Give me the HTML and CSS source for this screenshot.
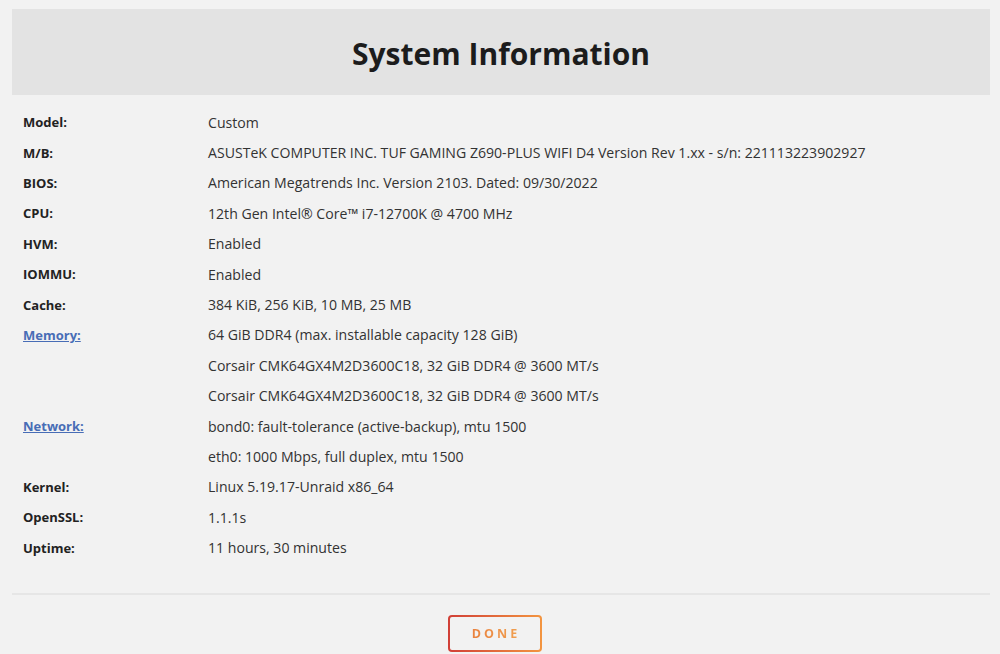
FILE: index.html
```html
<!DOCTYPE html>
<html>
<head>
<meta charset="utf-8">
<link rel="stylesheet" href="styles.css">
</head>
<body>
<div class="page">
  <div class="header"><h1 class="title">System Information</h1></div>
  <div class="info">
    <div class="row"><div class="label">Model:</div><div class="value">Custom</div></div>
    <div class="row"><div class="label">M/B:</div><div class="value">ASUSTeK COMPUTER INC. TUF GAMING Z690-PLUS WIFI D4 Version Rev 1.xx - s/n: 221113223902927</div></div>
    <div class="row"><div class="label">BIOS:</div><div class="value">American Megatrends Inc. Version 2103. Dated: 09/30/2022</div></div>
    <div class="row"><div class="label">CPU:</div><div class="value">12th Gen Intel® Core™ i7-12700K @ 4700 MHz</div></div>
    <div class="row"><div class="label">HVM:</div><div class="value">Enabled</div></div>
    <div class="row"><div class="label">IOMMU:</div><div class="value">Enabled</div></div>
    <div class="row"><div class="label">Cache:</div><div class="value">384 KiB, 256 KiB, 10 MB, 25 MB</div></div>
    <div class="row"><div class="label"><a class="link" href="#">Memory:</a></div><div class="value">64 GiB DDR4 (max. installable capacity 128 GiB)</div></div>
    <div class="row"><div class="label"></div><div class="value">Corsair CMK64GX4M2D3600C18, 32 GiB DDR4 @ 3600 MT/s</div></div>
    <div class="row"><div class="label"></div><div class="value">Corsair CMK64GX4M2D3600C18, 32 GiB DDR4 @ 3600 MT/s</div></div>
    <div class="row"><div class="label"><a class="link" href="#">Network:</a></div><div class="value">bond0: fault-tolerance (active-backup), mtu 1500</div></div>
    <div class="row"><div class="label"></div><div class="value">eth0: 1000 Mbps, full duplex, mtu 1500</div></div>
    <div class="row"><div class="label">Kernel:</div><div class="value">Linux 5.19.17-Unraid x86_64</div></div>
    <div class="row"><div class="label">OpenSSL:</div><div class="value">1.1.1s</div></div>
    <div class="row"><div class="label">Uptime:</div><div class="value">11 hours, 30 minutes</div></div>
  </div>
  <div class="footer">
    <button class="done"><span class="done-text">DONE</span></button>
  </div>
</div>
</body>
</html>
```
FILE: styles.css
```css
html, body {
  margin: 0;
  padding: 0;
  background: #f2f2f2;
}
body {
  font-family: "Open Sans", "Noto Sans", sans-serif;
  color: #333;
}
.page {
  padding: 9px 10px 0 12px;
}
.header {
  background: #e3e3e3;
  height: 86px;
  display: flex;
  align-items: center;
  justify-content: center;
}
.title {
  margin: 3px 0 0 0;
  font-size: 30px;
  font-weight: 700;
  color: #1c1c1c;
}
.info {
  padding: 12px 0 0 11px;
}
.row {
  display: flex;
  height: 30.4px;
  align-items: center;
  font-size: 13px;
}
.label {
  width: 185px;
  flex: none;
  font-weight: 700;
  color: #222;
}
.value {
  color: #333;
  font-size: 14.1px;
}
.link {
  color: #486db6;
  text-decoration: underline;
}
.footer {
  margin-top: 30px;
  border-top: 2px solid #e6e6e6;
  display: flex;
  justify-content: center;
  padding-top: 20px;
}
.done {
  margin-left: -13px;
  width: 94px;
  height: 37px;
  border: 2px solid transparent;
  border-radius: 4px;
  background: linear-gradient(#f2f2f2, #f2f2f2) padding-box,
              linear-gradient(90deg, #d13f37, #f39540) border-box;
  font-family: "Open Sans", sans-serif;
  font-size: 12.5px;
  font-weight: 700;
  letter-spacing: 3px;
  padding: 0 0 0 3px;
  color: #ee8c40;
}
.done-text {
  background: linear-gradient(90deg, #e9823f, #f1a050);
  -webkit-background-clip: text;
  background-clip: text;
  color: transparent;
}
```
